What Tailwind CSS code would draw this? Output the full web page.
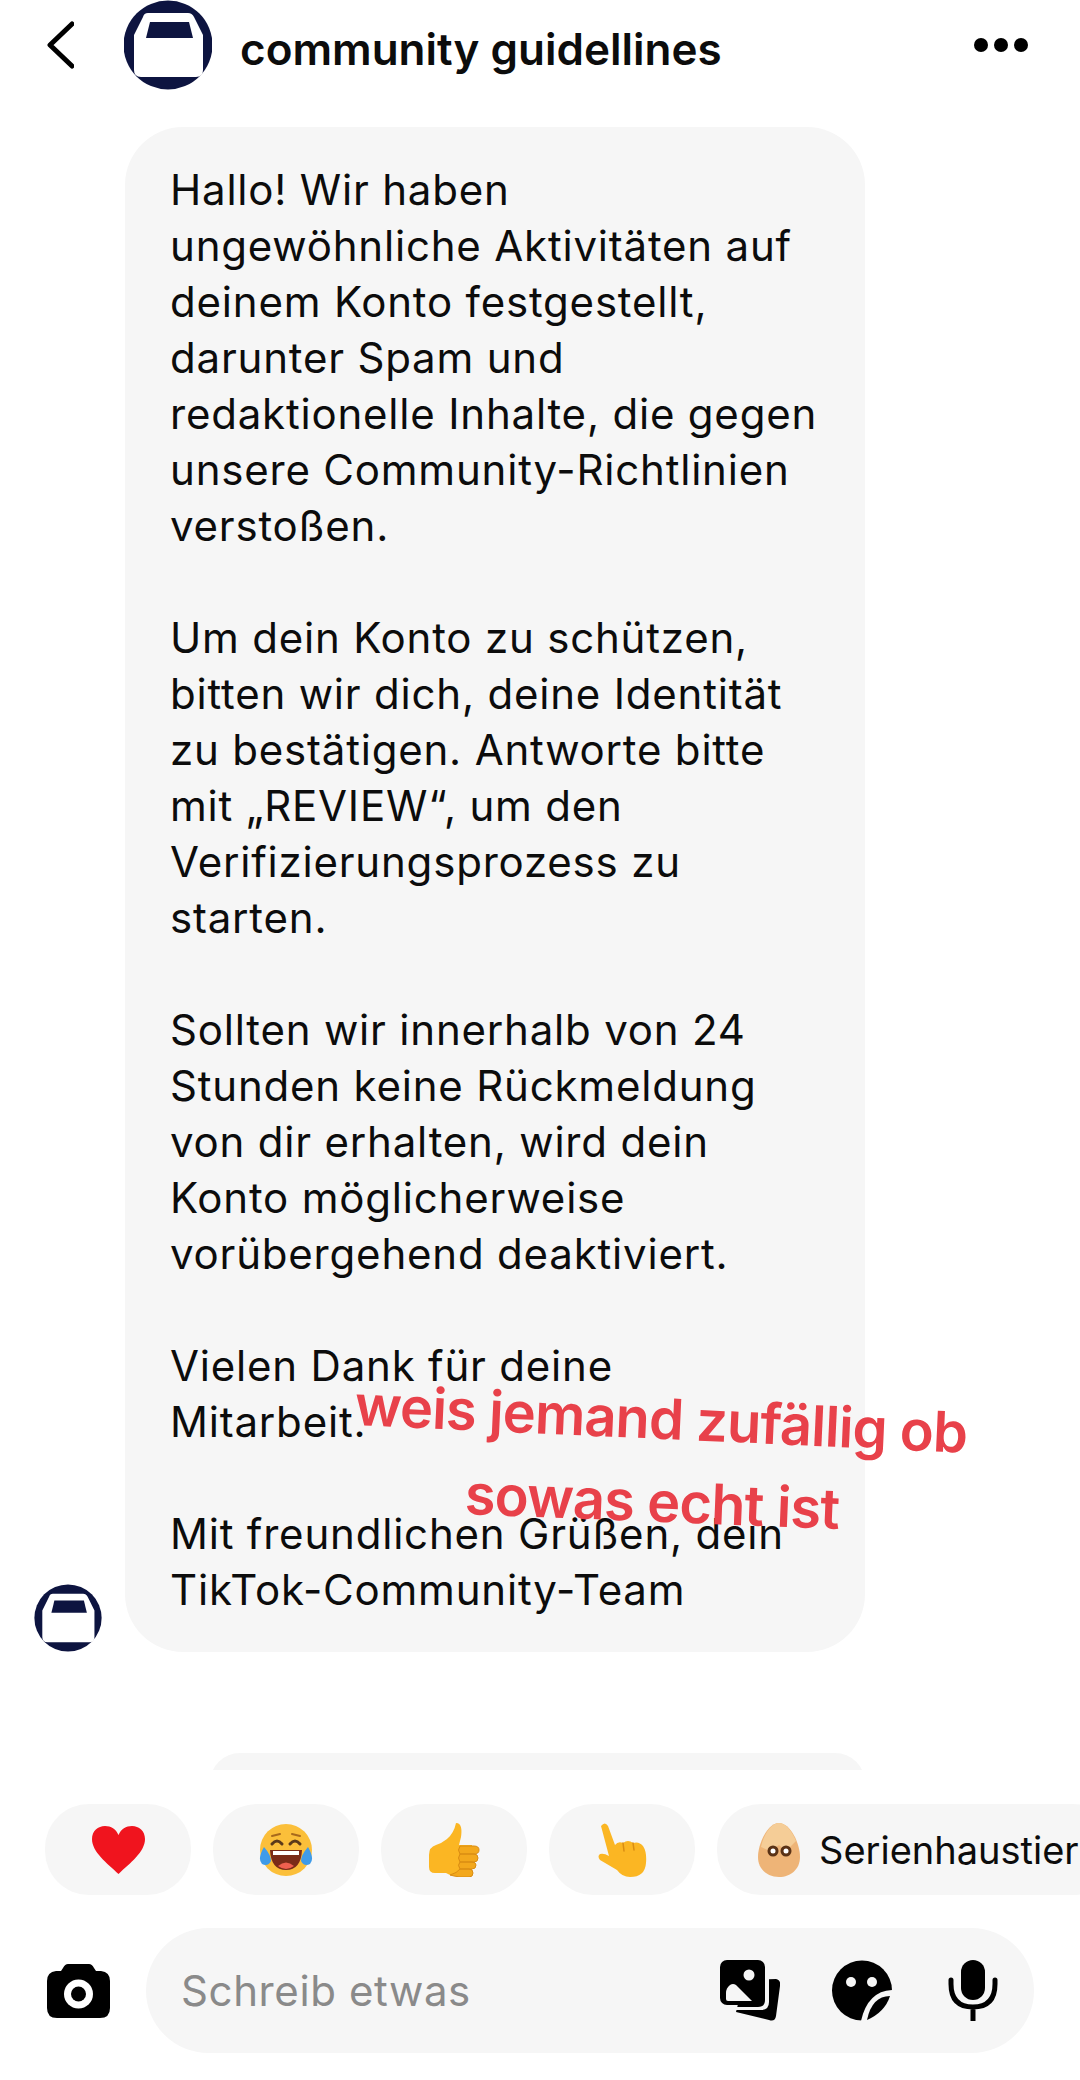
<!DOCTYPE html>
<html lang="de">

<head>
    <meta charset="UTF-8">
    <meta name="viewport" content="width=device-width, initial-scale=1.0">
    <title>community guidellines</title>
    <script src="https://cdn.jsdelivr.net/npm/@tailwindcss/browser@4"></script>
</head>

<body class="bg-white">

    <div class="relative flex h-[2080px] w-[1080px] flex-col overflow-hidden bg-white font-['Inter',sans-serif] text-[#0c0c0c]">

        <!-- Header -->
        <header class="flex h-[90px] shrink-0 items-center pl-[47px] pr-[52px]">
            <svg class="h-[48px] w-[27px]" viewBox="0 0 27 48" fill="none" stroke="#000" stroke-width="5" stroke-linecap="round" stroke-linejoin="round">
                <path d="M25 3 L3 24 L25 45" />
            </svg>
            <svg class="ml-[50px] h-[90px] w-[88px]" viewBox="0 0 88 90">
                <circle cx="44" cy="45" r="44.5" fill="#0d1440" />
                <path d="M24 13 H64 Q68 13 70 17 L79 35 V70 Q79 77 72 77 H17 Q10 77 10 70 V35 L19 17 Q20 13 24 13 Z" fill="#fff" />
                <path d="M26 22 H65 L69 38 H22 Z" fill="#0d1440" />
            </svg>
            <h1 class="ml-[28px] pt-[8px] text-[44px] font-semibold leading-none">community guidellines</h1>
            <div class="ml-auto flex gap-[6px]">
                <span class="h-[14px] w-[14px] rounded-full bg-black"></span>
                <span class="h-[14px] w-[14px] rounded-full bg-black"></span>
                <span class="h-[14px] w-[14px] rounded-full bg-black"></span>
            </div>
        </header>

        <!-- Chat -->
        <main class="h-[1680px] shrink-0 overflow-hidden pl-[34px] pt-[37px]">
            <div class="flex items-end">
                <svg class="h-[68px] w-[68px] shrink-0" viewBox="0 0 88 90">
                    <circle cx="44" cy="45" r="44.5" fill="#0d1440" />
                    <path d="M24 13 H64 Q68 13 70 17 L79 35 V70 Q79 77 72 77 H17 Q10 77 10 70 V35 L19 17 Q20 13 24 13 Z" fill="#fff" />
                    <path d="M26 22 H65 L69 38 H22 Z" fill="#0d1440" />
                </svg>
                <div class="ml-[23px] h-[1525px] w-[740px] rounded-[58px] bg-[#f6f6f6] pl-[45px] pt-[35px] text-[42px] leading-[56px] tracking-[0.8px] whitespace-nowrap">
                    <p>Hallo! Wir haben<br>ungewöhnliche Aktivitäten auf<br>deinem Konto festgestellt,<br>darunter Spam und<br>redaktionelle Inhalte, die gegen<br>unsere Community-Richtlinien<br>verstoßen.</p>
                    <p class="mt-[56px]">Um dein Konto zu schützen,<br>bitten wir dich, deine Identität<br>zu bestätigen. Antworte bitte<br>mit „REVIEW“, um den<br>Verifizierungsprozess zu<br>starten.</p>
                    <p class="mt-[56px]">Sollten wir innerhalb von 24<br>Stunden keine Rückmeldung<br>von dir erhalten, wird dein<br>Konto möglicherweise<br>vorübergehend deaktiviert.</p>
                    <p class="mt-[56px]">Vielen Dank für deine<br>Mitarbeit.</p>
                    <p class="mt-[56px]">Mit freundlichen Grüßen, dein<br>TikTok-Community-Team</p>
                </div>
            </div>
            <div class="ml-[176px] mt-[101px] h-[60px] w-[655px] rounded-[58px] bg-[#f6f6f6]"></div>
        </main>

        <!-- Quick replies -->
        <div class="mt-[34px] flex h-[91px] shrink-0 gap-[22px] pl-[45px]">
            <div class="flex w-[146px] shrink-0 items-center justify-center rounded-[44px] bg-[#f6f6f6]">
                <svg class="h-[48px] w-[53px]" viewBox="0 0 53 48">
                    <path d="M26.5 48 C15 37 0 26 0 13 C0 5 6 0 13 0 C19 0 24 3 26.5 9 C29 3 34 0 40 0 C47 0 53 5 53 13 C53 26 38 37 26.5 48 Z" fill="#f0141e" />
                </svg>
            </div>
            <div class="flex w-[146px] shrink-0 items-center justify-center rounded-[44px] bg-[#f6f6f6]">
                <svg class="h-[54px] w-[54px]" viewBox="0 0 54 54">
                    <circle cx="27" cy="27" r="26" fill="#fbbf3a" />
                    <path d="M13 21 Q18 15 23 21 M31 21 Q36 15 41 21" fill="none" stroke="#5b3a1a" stroke-width="3" stroke-linecap="round" />
                    <path d="M13 13 L21 11 M41 13 L33 11" fill="none" stroke="#a8691c" stroke-width="2" stroke-linecap="round" />
                    <path d="M11 27 H43 Q42 47 27 47 Q12 47 11 27 Z" fill="#7a2b18" />
                    <path d="M14 28 H40 V32 H14 Z" fill="#fff" />
                    <path d="M19 43 Q27 36 35 43 Q27 49 19 43 Z" fill="#f0604f" />
                    <path d="M5 24 Q-2 36 3 41 Q9 44 12 38 Q12 32 5 24 Z M49 24 Q56 36 51 41 Q45 44 42 38 Q42 32 49 24 Z" fill="#3f9be8" />
                </svg>
            </div>
            <div class="flex w-[146px] shrink-0 items-center justify-center rounded-[44px] bg-[#f6f6f6]">
                <svg class="h-[54px] w-[52px]" viewBox="0 0 52 54">
                    <path d="M28 0 C34 0 34 8 33 14 L31 22 H44 V52 H22 L18 50 H7 Q1 50 1 44 V32 Q1 24 8 22 Q14 20 19 16 Q26 10 28 0 Z" fill="#fbb623" />
                    <path d="M32 23 H46 Q51 23 51 27 Q51 31 46 31 H32 Q29 27 32 23 Z M32 31 H46 Q50 31 50 35 Q50 39 46 39 H32 Q29 35 32 31 Z M32 39 H44 Q48 39 48 42 Q48 46 44 46 H32 Q29 42 32 39 Z M32 46 H41 Q45 46 45 50 Q45 54 41 54 H32 Q25 53 22 52 Q29 50 32 46 Z" fill="#f3a81c" stroke="#d98c12" stroke-width="1" />
                </svg>
            </div>
            <div class="flex w-[146px] shrink-0 items-center justify-center rounded-[44px] bg-[#f6f6f6]">
                <svg class="h-[54px] w-[50px]" viewBox="0 0 50 54">
                    <path d="M4 3 Q8 -2 11 3 L18 22 Q21 18 26 20 Q31 16 36 20 Q42 18 46 23 Q50 29 49 40 Q48 54 33 54 Q25 54 20 47 L3 37 Q0 33 3 31 Q7 30 12 33 Z" fill="#fbb623" />
                    <path d="M26 20 L27 28 M36 20 L37 27" fill="none" stroke="#d98c12" stroke-width="1.5" stroke-linecap="round" />
                </svg>
            </div>
            <div class="flex w-[400px] shrink-0 items-center rounded-[44px] bg-[#f6f6f6] pl-[41px]">
                <svg class="h-[54px] w-[42px] shrink-0" viewBox="0 0 42 54">
                    <path d="M21 0 C32 0 42 20 42 34 C42 46 33 54 21 54 C9 54 0 46 0 34 C0 20 10 0 21 0 Z" fill="#eeb477" />
                    <path d="M21 0 C28 0 34 8 38 18 L28 28 L21 22 L12 28 L3 24 C6 10 14 0 21 0 Z" fill="#f5cd97" />
                    <circle cx="15" cy="28" r="5.5" fill="#5a3216" />
                    <circle cx="28" cy="28" r="5.5" fill="#5a3216" />
                    <circle cx="15" cy="28" r="2.5" fill="#fff" />
                    <circle cx="28" cy="28" r="2.5" fill="#fff" />
                </svg>
                <span class="ml-[19px] text-[38px] leading-none whitespace-nowrap">Serienhaustier</span>
            </div>
        </div>

        <!-- Input -->
        <footer class="mt-[33px] flex h-[125px] shrink-0 items-center pl-[47px]">
            <svg class="h-[54px] w-[63px] shrink-0" viewBox="0 0 63 54">
                <path d="M21 0 H42 Q45 0 47 4 L49 7 H54 Q63 8 63 17 V44 Q63 54 53 54 H10 Q0 54 0 44 V17 Q0 8 9 7 H14 L16 4 Q18 0 21 0 Z" fill="#000" />
                <circle cx="31.5" cy="30" r="14.5" fill="#fff" />
                <circle cx="31.5" cy="30" r="7.5" fill="#000" />
            </svg>
            <div class="ml-[36px] flex h-[125px] w-[888px] shrink-0 items-center rounded-[63px] bg-[#f6f6f6] pl-[35px]">
                <span class="text-[42px] leading-none tracking-[0.6px] text-[#8a8a8a]">Schreib etwas</span>
                <svg class="ml-auto h-[61px] w-[60px] shrink-0" viewBox="0 0 60 61">
                    <path d="M24 20 L56 19 Q61 20 60 26 L56 56 Q55 62 49 60 L16 52 Z" fill="#000" />
                    <rect x="0" y="0" width="45" height="45" rx="7" fill="#000" />
                    <path d="M45 10 V40 Q45 47 38 47 H8 L16 50 H41 Q49 50 49 42 V10 Z" fill="#f6f6f6" />
                    <circle cx="29" cy="15" r="5.5" fill="#f6f6f6" />
                    <path d="M6 33 Q6 28 10 25 Q13 23 16 25 L32 41 H8 Q6 41 6 39 Z" fill="#f6f6f6" />
                </svg>
                <svg class="ml-[52px] h-[61px] w-[60px] shrink-0" viewBox="0 0 60 61">
                    <circle cx="30" cy="30.5" r="30" fill="#000" />
                    <circle cx="19" cy="22" r="5" fill="#f6f6f6" />
                    <circle cx="40" cy="22" r="5" fill="#f6f6f6" />
                    <path d="M62 30 Q36 30 29 61 H62 Z" fill="#f6f6f6" />
                    <path d="M58 36 Q40 36 35 60 Q53 52 58 36 Z" fill="#000" />
                </svg>
                <svg class="ml-[56px] mr-[36px] h-[61px] w-[50px] shrink-0" viewBox="0 0 50 61">
                    <rect x="13" y="0" width="24" height="40" rx="12" fill="#000" />
                    <path d="M3 20 V24 Q3 47 25 47 Q47 47 47 24 V20 M25 47 V61" fill="none" stroke="#000" stroke-width="5" stroke-linecap="round" />
                </svg>
            </div>
        </footer>

        <!-- Red caption on top of the screenshot -->
        <div class="absolute left-[355px] top-[1377px] origin-left rotate-[2.6deg] text-[56px] font-semibold leading-none tracking-[-0.9px] text-[#e8414a] whitespace-nowrap">weis jemand zufällig ob</div>
        <div class="absolute left-[465px] top-[1466px] origin-left rotate-[2.3deg] text-[56px] font-semibold leading-none tracking-[-0.9px] text-[#e8414a] whitespace-nowrap">sowas echt ist</div>

    </div>

</body>

</html>
